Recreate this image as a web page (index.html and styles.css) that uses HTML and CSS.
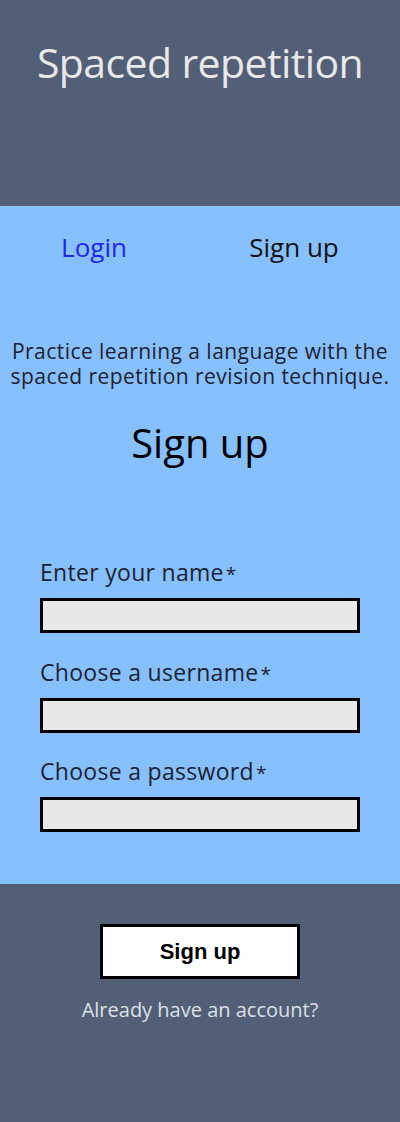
FILE: index.html
```html
<!DOCTYPE html>
<html lang="en">
<head>
<meta charset="utf-8">
<title>Spaced repetition</title>
<link rel="stylesheet" href="styles.css">
</head>
<body>
<header class="site-header">
  <h1 class="site-title">Spaced repetition</h1>
</header>
<main class="panel">
  <nav class="tabs">
    <a class="tab tab-link" href="#">Login</a>
    <span class="tab tab-current">Sign up</span>
  </nav>
  <p class="intro">Practice learning a language with the spaced repetition revision technique.</p>
  <h2 class="form-title">Sign up</h2>
  <form class="form">
    <label class="field">
      <span class="label">Enter your name<span class="req">*</span></span>
      <input class="input" type="text">
    </label>
    <label class="field">
      <span class="label">Choose a username<span class="req">*</span></span>
      <input class="input" type="text">
    </label>
    <label class="field">
      <span class="label">Choose a password<span class="req">*</span></span>
      <input class="input" type="password">
    </label>
  </form>
</main>
<footer class="site-footer">
  <button class="btn" type="button">Sign up</button>
  <p class="already">Already have an account?</p>
</footer>
</body>
</html>
```

FILE: styles.css
```css
* { box-sizing: border-box; }
html, body { margin: 0; padding: 0; }
body {
  width: 400px;
  font-family: "Open Sans", "Noto Sans", sans-serif;
  background: #535e77;
}
.site-header {
  height: 206px;
  background: #535e77;
  display: flex;
  justify-content: center;
  padding-top: 36px;
}
.site-title {
  margin: 0;
  font-size: 41px;
  font-weight: 400;
  letter-spacing: -0.6px;
  line-height: 52px;
  color: #e8e8ea;
}
.panel {
  height: 678px;
  background: #87c0ff;
  padding-top: 21px;
}
.tabs {
  display: grid;
  grid-template-columns: 188px 1fr;
  text-align: center;
}
.tab {
  font-size: 26px;
  line-height: 40px;
  text-decoration: none;
}
.tab-link { color: #2323ee; }
.tab-current { color: #111; }
.intro {
  margin: 72px 0 0;
  text-align: center;
  font-size: 21px;
  letter-spacing: 0.45px;
  line-height: 25px;
  color: #1c2232;
}
.form-title {
  margin: 26px 0 0;
  text-align: center;
  font-size: 40px;
  font-weight: 400;
  line-height: 56px;
  color: #000;
}
.form {
  margin-top: 85px;
  padding: 0 40px;
  display: flex;
  flex-direction: column;
  gap: 22.5px;
}
.field {
  display: flex;
  flex-direction: column;
  gap: 10px;
}
.label {
  font-size: 23px;
  letter-spacing: 0.3px;
  line-height: 32px;
  height: 32px;
  color: #1c2232;
}
.req {
  font-size: 19px;
  line-height: 1;
  margin-left: 2px;
}
.input {
  display: block;
  width: 320px;
  height: 35px;
  margin: 0;
  border: 3px solid #000;
  background: #e8e8e8;
  border-radius: 0;
}
.site-footer {
  height: 238px;
  display: flex;
  flex-direction: column;
  align-items: center;
  padding-top: 40px;
}
.btn {
  width: 200px;
  height: 55px;
  border: 3px solid #000;
  background: #fff;
  font-family: "Liberation Sans", Arial, sans-serif;
  font-weight: 700;
  font-size: 22px;
  color: #000;
  border-radius: 0;
  padding: 0;
}
.already {
  margin: 18px 0 0;
  font-size: 20px;
  line-height: 26px;
  color: #dde0e8;
}
```
